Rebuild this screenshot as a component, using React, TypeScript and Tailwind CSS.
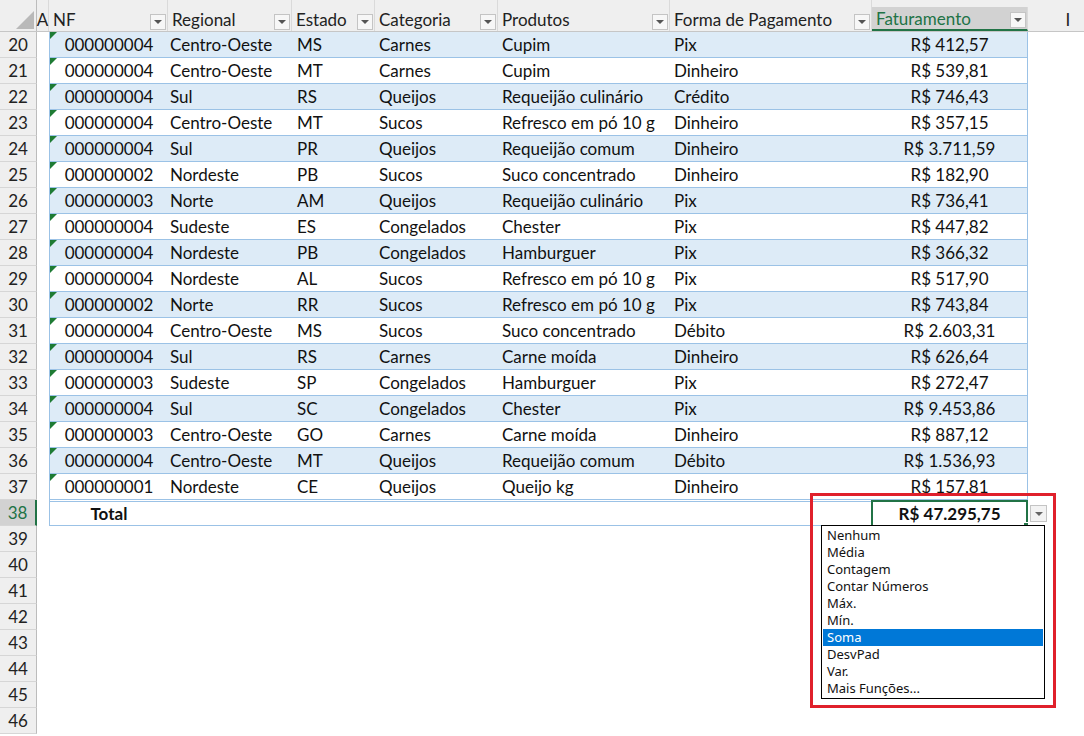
import React from "react";

type Row = [string, string, string, string, string, string, string];

const rows: Row[] = [
  ["000000004", "Centro-Oeste", "MS", "Carnes", "Cupim", "Pix", "R$ 412,57"],
  ["000000004", "Centro-Oeste", "MT", "Carnes", "Cupim", "Dinheiro", "R$ 539,81"],
  ["000000004", "Sul", "RS", "Queijos", "Requeijão culinário", "Crédito", "R$ 746,43"],
  ["000000004", "Centro-Oeste", "MT", "Sucos", "Refresco em pó 10 g", "Dinheiro", "R$ 357,15"],
  ["000000004", "Sul", "PR", "Queijos", "Requeijão comum", "Dinheiro", "R$ 3.711,59"],
  ["000000002", "Nordeste", "PB", "Sucos", "Suco concentrado", "Dinheiro", "R$ 182,90"],
  ["000000003", "Norte", "AM", "Queijos", "Requeijão culinário", "Pix", "R$ 736,41"],
  ["000000004", "Sudeste", "ES", "Congelados", "Chester", "Pix", "R$ 447,82"],
  ["000000004", "Nordeste", "PB", "Congelados", "Hamburguer", "Pix", "R$ 366,32"],
  ["000000004", "Nordeste", "AL", "Sucos", "Refresco em pó 10 g", "Pix", "R$ 517,90"],
  ["000000002", "Norte", "RR", "Sucos", "Refresco em pó 10 g", "Pix", "R$ 743,84"],
  ["000000004", "Centro-Oeste", "MS", "Sucos", "Suco concentrado", "Débito", "R$ 2.603,31"],
  ["000000004", "Sul", "RS", "Carnes", "Carne moída", "Dinheiro", "R$ 626,64"],
  ["000000003", "Sudeste", "SP", "Congelados", "Hamburguer", "Pix", "R$ 272,47"],
  ["000000004", "Sul", "SC", "Congelados", "Chester", "Pix", "R$ 9.453,86"],
  ["000000003", "Centro-Oeste", "GO", "Carnes", "Carne moída", "Dinheiro", "R$ 887,12"],
  ["000000004", "Centro-Oeste", "MT", "Queijos", "Requeijão comum", "Débito", "R$ 1.536,93"],
  ["000000001", "Nordeste", "CE", "Queijos", "Queijo kg", "Dinheiro", "R$ 157,81"],
];

const functions = ["Nenhum", "Média", "Contagem", "Contar Números", "Máx.", "Mín.", "Soma", "DesvPad", "Var.", "Mais Funções..."];

function FilterButton() {
  return (
    <div className="w-[16px] h-[16px] mb-[1px] mr-[1px] shrink-0 border border-[#c4c4c4] bg-[#f7f7f7] flex items-center justify-center">
      <svg width="8" height="4" viewBox="0 0 8 4">
        <polygon points="0,0 8,0 4,4" fill="#555" />
      </svg>
    </div>
  );
}

function HeaderCell({ label, width, active }: { label: string; width: string; active?: boolean }) {
  return (
    <div
      className={`${width} shrink-0 flex items-end justify-between border-r border-[#dadada] ${
        active ? "bg-[#d2d2d2] border-b-2 border-b-[#217346] text-[#217346] mt-[7px] h-[24px]" : "h-full"
      }`}
    >
      <span className={`pl-[4px] leading-[20px] whitespace-nowrap ${active ? "pb-0" : "pb-[1px]"}`}>{label}</span>
      <FilterButton />
    </div>
  );
}

function RowNumber({ n, active }: { n: number; active?: boolean }) {
  return (
    <div
      className={`w-[37px] shrink-0 h-full flex items-center justify-center border-b border-[#d6d6d6] ${
        active ? "bg-[#d2d2d2] text-[#217346] border-r-2 border-r-[#217346]" : "bg-[#efefef] text-[#222] border-r border-r-[#bcbcbc]"
      }`}
    >
      {n}
    </div>
  );
}

export default function App() {
  return (
    <div
      className="relative w-[1084px] h-[736px] overflow-hidden bg-white text-[17px] text-[#111]"
      style={{ fontFamily: "Lato, 'Open Sans', sans-serif" }}
    >
      {/* column header band, showing table headers */}
      <div className="flex h-[32px] bg-[#efefef] border-b border-[#c6c6c6] text-[#222]">
        <div className="w-[37px] shrink-0 flex items-end justify-end pr-[2px] pb-[2px] border-r border-[#bcbcbc]">
          <svg width="18" height="18" viewBox="0 0 18 18">
            <polygon points="18,0 18,18 0,18" fill="#b9b9b9" />
          </svg>
        </div>
        <div className="w-[12px] shrink-0 flex items-end justify-center pb-[1px] leading-[20px] border-r border-[#dadada]">A</div>
        <HeaderCell label="NF" width="w-[119px]" />
        <HeaderCell label="Regional" width="w-[124px]" />
        <HeaderCell label="Estado" width="w-[83px]" />
        <HeaderCell label="Categoria" width="w-[123px]" />
        <HeaderCell label="Produtos" width="w-[172px]" />
        <HeaderCell label="Forma de Pagamento" width="w-[202px]" />
        <HeaderCell label="Faturamento" width="w-[156px]" active />
        <div className="w-[80px] shrink-0 flex items-end justify-center pb-[1px] leading-[20px]">I</div>
      </div>

      {/* table rows */}
      {rows.map((r, i) => (
        <div key={i} className="flex h-[26px] leading-[26px]">
          <RowNumber n={20 + i} />
          <div className="w-[12px] shrink-0" />
          <div
            className={`w-[979px] shrink-0 flex border-l border-r border-[#9bc2e6] border-b ${
              i % 2 === 0 ? "bg-[#ddebf7]" : "bg-white"
            }`}
          >
            <div className="relative w-[118px] text-center">
              <svg className="absolute left-0 top-0" width="7" height="7" viewBox="0 0 7 7">
                <polygon points="0,0 7,0 0,7" fill="#1e7b34" />
              </svg>
              {r[0]}
            </div>
            <div className="w-[124px] pl-[2px]">{r[1]}</div>
            <div className="w-[83px] pl-[5px]">{r[2]}</div>
            <div className="w-[123px] pl-[4px]">{r[3]}</div>
            <div className="w-[172px] pl-[4px] whitespace-nowrap">{r[4]}</div>
            <div className="w-[202px] pl-[4px]">{r[5]}</div>
            <div className="w-[155px] text-center">{r[6]}</div>
          </div>
        </div>
      ))}

      {/* total row */}
      <div className="flex h-[26px] leading-[24px]">
        <RowNumber n={38} active />
        <div className="w-[12px] shrink-0" />
        <div className="w-[979px] shrink-0 flex border-l border-r border-b border-[#9bc2e6] border-t-[3px] border-t-[#9bc2e6] border-double font-bold -mt-[1px] h-[27px]">
          <div className="w-[118px] text-center">Total</div>
          <div className="w-[704px]" />
          <div className="relative w-[157px] -mr-[1px] text-center border-2 border-[#217346] -mt-[2px] h-[27px]">
            R$ 47.295,75
            <div className="absolute -right-[3px] -bottom-[3px] w-[6px] h-[6px] bg-[#217346] border border-white" />
          </div>
        </div>
      </div>

      {/* empty rows */}
      {[39, 40, 41, 42, 43, 44, 45, 46].map((n) => (
        <div key={n} className="flex h-[26px]">
          <RowNumber n={n} />
        </div>
      ))}

      {/* total function dropdown button */}
      <div className="absolute left-[1030px] top-[505px] w-[17px] h-[17px] border border-[#c4c4c4] bg-[#f3f3f3] flex items-center justify-center">
        <svg width="8" height="4" viewBox="0 0 8 4">
          <polygon points="0,0 8,0 4,4" fill="#666" />
        </svg>
      </div>

      {/* dropdown list */}
      <div
        className="absolute left-[821px] top-[525px] w-[224px] border border-black bg-white p-[1px] text-[13px] leading-[17px] text-[#111]"
        style={{ fontFamily: "'Noto Sans', 'Open Sans', sans-serif" }}
      >
        {functions.map((f) => (
          <div key={f} className={`pl-[4px] h-[17px] ${f === "Soma" ? "bg-[#0078d7] text-white" : ""}`}>
            {f}
          </div>
        ))}
      </div>

      {/* red annotation frame */}
      <div className="absolute left-[810px] top-[493px] w-[246px] h-[215px] border-[3px] border-[#e0202b] pointer-events-none" />
    </div>
  );
}
